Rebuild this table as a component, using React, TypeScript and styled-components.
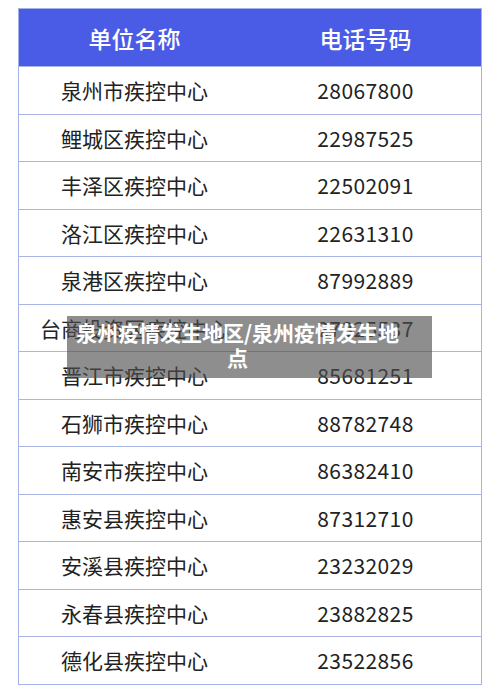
import React from "react";
import styled, {createGlobalStyle} from "styled-components";

const GlobalStyle = createGlobalStyle`
  html, body {
    margin: 0;
    padding: 0;
    background: #ffffff;
  }
  body {
    font-family: "Noto Sans CJK SC", "Noto Sans", sans-serif;
  }
`

const Page = styled.div`
  position: relative;
  width: 500px;
  height: 695px;
  padding: 8px 18px 0 18px;
  box-sizing: border-box;
`

const Table = styled.div`
  border: 1.5px solid #a4b2ea;
  display: flex;
  flex-direction: column;
`

const HeaderRow = styled.div`
  display: grid;
  grid-template-columns: 1fr 1fr;
  height: 57px;
  align-items: center;
  background: #4a5ce6;
  color: #ffffff;
  font-size: 23px;
  font-weight: 500;
  letter-spacing: 0.5px;
`

const Row = styled.div`
  display: grid;
  grid-template-columns: 1fr 1fr;
  height: 47.5px;
  align-items: center;
  color: #222222;
  font-size: 21px;
  border-top: 1.5px solid #a9b5e6;
  box-sizing: border-box;
`

const Cell = styled.div<{ numeric?: boolean }>`
  text-align: center;
  white-space: nowrap;
  letter-spacing: ${props => props.numeric ? "0.4px" : "0"};
`

// caption laid over the middle of the table
const Overlay = styled.div`
  position: absolute;
  left: 67px;
  top: 316px;
  width: 365px;
  height: 62px;
  box-sizing: border-box;
  padding: 4px 32px 0 8px;
  background: rgba(78, 78, 78, 0.64);
  color: #ffffff;
  font-size: 21px;
  font-weight: 700;
  line-height: 25px;
  text-align: center;
`

const rows = [
  ["泉州市疾控中心", "28067800"],
  ["鲤城区疾控中心", "22987525"],
  ["丰泽区疾控中心", "22502091"],
  ["洛江区疾控中心", "22631310"],
  ["泉港区疾控中心", "87992889"],
  ["台商投资区疾控中心", "27325537"],
  ["晋江市疾控中心", "85681251"],
  ["石狮市疾控中心", "88782748"],
  ["南安市疾控中心", "86382410"],
  ["惠安县疾控中心", "87312710"],
  ["安溪县疾控中心", "23232029"],
  ["永春县疾控中心", "23882825"],
  ["德化县疾控中心", "23522856"],
]

export default function App() {
  return <>
    <GlobalStyle/>
    <Page>
      <Table>
        <HeaderRow>
          <Cell>单位名称</Cell>
          <Cell>电话号码</Cell>
        </HeaderRow>
        {rows.map(([name, phone], index) => (
          <Row key={index}>
            <Cell>{name}</Cell>
            <Cell numeric>{phone}</Cell>
          </Row>
        ))}
      </Table>
      <Overlay>泉州疫情发生地区/泉州疫情发生地点</Overlay>
    </Page>
  </>
}
